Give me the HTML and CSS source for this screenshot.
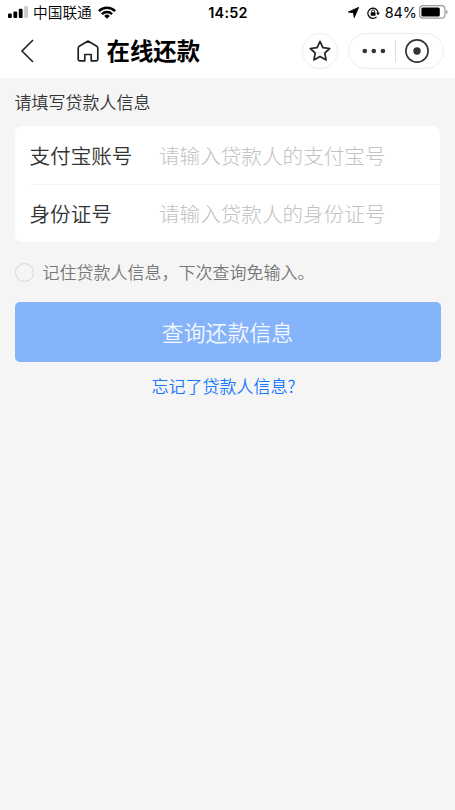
FILE: index.html
```html
<!DOCTYPE html>
<html lang="zh-CN">
<head>
<meta charset="utf-8">
<meta name="viewport" content="width=device-width, initial-scale=1">
<title>在线还款</title>
<link rel="stylesheet" href="styles.css">
</head>
<body>
<header class="top">
  <div class="status">
    <div class="status-left">
      <svg class="signal" width="20" height="12" viewBox="0 0 20 12"><rect x="0" y="7.6" width="3.8" height="4.4" rx="1"/><rect x="5.4" y="5.6" width="3.8" height="6.4" rx="1"/><rect x="10.8" y="2.8" width="3.8" height="9.2" rx="1"/><rect x="16.2" y="0" width="3.8" height="12" rx="1" fill="#ccc"/></svg>
      <span class="carrier">中国联通</span>
      <svg class="wifi" width="18" height="13" viewBox="0 0 18 13"><g fill="none" stroke="#000" stroke-width="2.5"><path d="M.9 5.1a11.6 11.6 0 0 1 16.2 0"/><path d="M3.9 8.2a7.3 7.3 0 0 1 10.2 0"/></g><path d="M9 12.7 6.2 9.9a4 4 0 0 1 5.6 0z"/></svg>
    </div>
    <span class="time">14:52</span>
    <div class="status-right">
      <svg class="location" width="11" height="11" viewBox="0 0 11 11"><path d="M10.6.4 6.2 10.6 5.5 5.7.4 5z" stroke="#000" stroke-width=".9" stroke-linejoin="round"/></svg>
      <svg class="lock" width="13" height="12" viewBox="0 0 13 12"><path d="M9.6 9.9A5.1 5.1 0 1 1 11.1 6.2" fill="none" stroke="#000" stroke-width="1.2"/><path d="M9.2 5.7h3.7l-1.8 2.6z"/><rect x="3.7" y="5.2" width="4.8" height="3.5" rx=".5"/><path d="M4.7 5.4V4.2a1.4 1.4 0 0 1 2.8 0v1.2" fill="none" stroke="#000" stroke-width=".9"/></svg>
      <span class="percent">84%</span>
      <svg class="battery" width="30" height="14" viewBox="0 0 30 14"><rect x=".7" y=".7" width="25.2" height="12.4" rx="3.4" fill="none" stroke="#999" stroke-width="1.2"/><rect x="2.4" y="2.4" width="18.4" height="9" rx="1.5"/><path d="M27.2 4.8c1.8.6 1.8 3.7 0 4.3z" fill="#999"/></svg>
    </div>
  </div>
  <nav class="nav">
    <svg class="back" width="14" height="24" viewBox="0 0 14 24"><path d="M13 1 2 12l11 11" fill="none" stroke="#222" stroke-width="1.6"/></svg>
    <svg class="home" width="22" height="22" viewBox="0 0 22 22"><path d="M1.2 8.2Q1.2 7 2.2 6.3L11 1l8.8 5.3q1 .7 1 1.9v11.1q0 1.5-1.5 1.5h-5.1v-6.3H7.8v6.3H2.7q-1.5 0-1.5-1.5z" fill="none" stroke="#222" stroke-width="1.7" stroke-linejoin="round"/></svg>
    <h1 class="title">在线还款</h1>
    <div class="star"><svg width="22" height="22" viewBox="0 0 22 22"><path d="m11 1.5 2.9 6.2 6.8.8-5 4.6 1.4 6.8-6.1-3.4-6.1 3.4 1.4-6.8-5-4.6 6.8-.8z" fill="none" stroke="#222" stroke-width="1.7" stroke-linejoin="round"/></svg></div>
    <div class="capsule">
      <svg width="24" height="6" viewBox="0 0 24 6" fill="#333"><circle cx="2.8" cy="3" r="2.3"/><circle cx="11.8" cy="3" r="2.3"/><circle cx="20.9" cy="3" r="2.3"/></svg>
      <span class="divider"></span>
      <svg width="24" height="24" viewBox="0 0 24 24"><circle cx="12" cy="12" r="11.1" fill="none" stroke="#333" stroke-width="1.6"/><circle cx="12" cy="12" r="3.7" fill="#333"/></svg>
    </div>
  </nav>
</header>
<main class="content">
  <h2 class="hint">请填写贷款人信息</h2>
  <section class="card">
    <div class="row"><span class="label">支付宝账号</span><span class="placeholder">请输入贷款人的支付宝号</span></div>
    <div class="row"><span class="label">身份证号</span><span class="placeholder">请输入贷款人的身份证号</span></div>
  </section>
  <div class="remember"><span class="radio"></span><span class="remember-text">记住贷款人信息，下次查询免输入。</span></div>
  <button class="submit" type="button">查询还款信息</button>
  <a class="forgot">忘记了贷款人信息?</a>
</main>
</body>
</html>
```

FILE: styles.css
```css
* { box-sizing: border-box; }

body {
  margin: 0;
  min-height: 810px;
  background: #f5f5f5;
  color: #333;
  font-family: "Noto Sans CJK SC", sans-serif;
  font-weight: 300;
  white-space: nowrap;
}

svg { display: block; flex: none; }

.top { height: 78px; background: #fff; }

.status {
  display: grid;
  grid-template-columns: 1fr auto 1fr;
  height: 25px;
  padding: 0 7px 0 8px;
  color: #000;
}

.status-left, .status-right { display: flex; align-items: center; }
.status-right { justify-content: flex-end; }
.signal { margin-top: -1px; }
.carrier { margin-left: 5px; padding-bottom: 1px; font-size: 14.7px; line-height: 24px; font-weight: 350; }
.wifi { margin-left: 6px; margin-top: -1px; }
.time { font: 600 14.4px/25px Inter, sans-serif; letter-spacing: .25px; }
.location { margin-right: 8px; }
.lock { margin-right: 5px; }
.percent { padding-top: 1px; font: 400 14.4px/24px Inter, sans-serif; }
.battery { margin-left: 2px; margin-right: -1px; margin-top: -1px; }

.nav { display: flex; align-items: center; height: 52px; padding: 0 11px 0 20px; }
.home { margin-left: 43px; margin-top: -1px; }
.title { margin: 0 auto 0 7.5px; padding-bottom: 1px; color: #000; font-size: 23.4px; line-height: 35px; font-weight: 700; }

.star {
  display: flex;
  align-items: center;
  justify-content: center;
  width: 36px;
  height: 36px;
  border: 1px solid #eee;
  border-radius: 50%;
}

.capsule {
  display: flex;
  align-items: center;
  width: 96px;
  height: 36px;
  margin-left: 10px;
  padding-left: 13px;
  border: 1px solid #eee;
  border-radius: 18px;
}

.divider { width: 1px; height: 22px; margin: 0 9px; background: #ddd; }

.content { display: flex; flex-direction: column; padding: 0 15px; }
.hint { margin: 11px 0 12px -.5px; font-size: 17px; line-height: 25px; font-weight: 350; }

.card { height: 116px; padding-left: 15px; border-radius: 7px; background: #fff; }
.row { display: flex; align-items: center; height: 58px; padding-bottom: 1px; font-size: 20.6px; line-height: 30px; }
.row + .row { padding-bottom: 2px; border-top: 1px solid #f3f3f3; }
.label { width: 129.5px; margin-left: -.5px; font-weight: 350; }
.placeholder { color: #c2c2c2; }

.remember { display: flex; align-items: center; height: 25px; margin-top: 18px; color: #777; font-size: 17px; line-height: 25px; font-weight: 350; }
.remember-text { padding-bottom: 2px; line-height: 23px; }
.radio { width: 19px; height: 19px; margin-left: -.5px; margin-right: 9px; border: 1px solid #d6d6d6; border-radius: 50%; }

.submit {
  width: 426px;
  height: 60px;
  margin: 17px 0 0 -.5px;
  padding: 0;
  border: 0;
  border-radius: 5px;
  background: #85b4fa;
  color: #f4f8ff;
  font: 350 21.9px/32px "Noto Sans CJK SC", sans-serif;
}

.forgot { align-self: center; margin: 11px 8px 0 0; color: #1677ff; font-size: 17px; line-height: 25px; font-weight: 350; }
```
